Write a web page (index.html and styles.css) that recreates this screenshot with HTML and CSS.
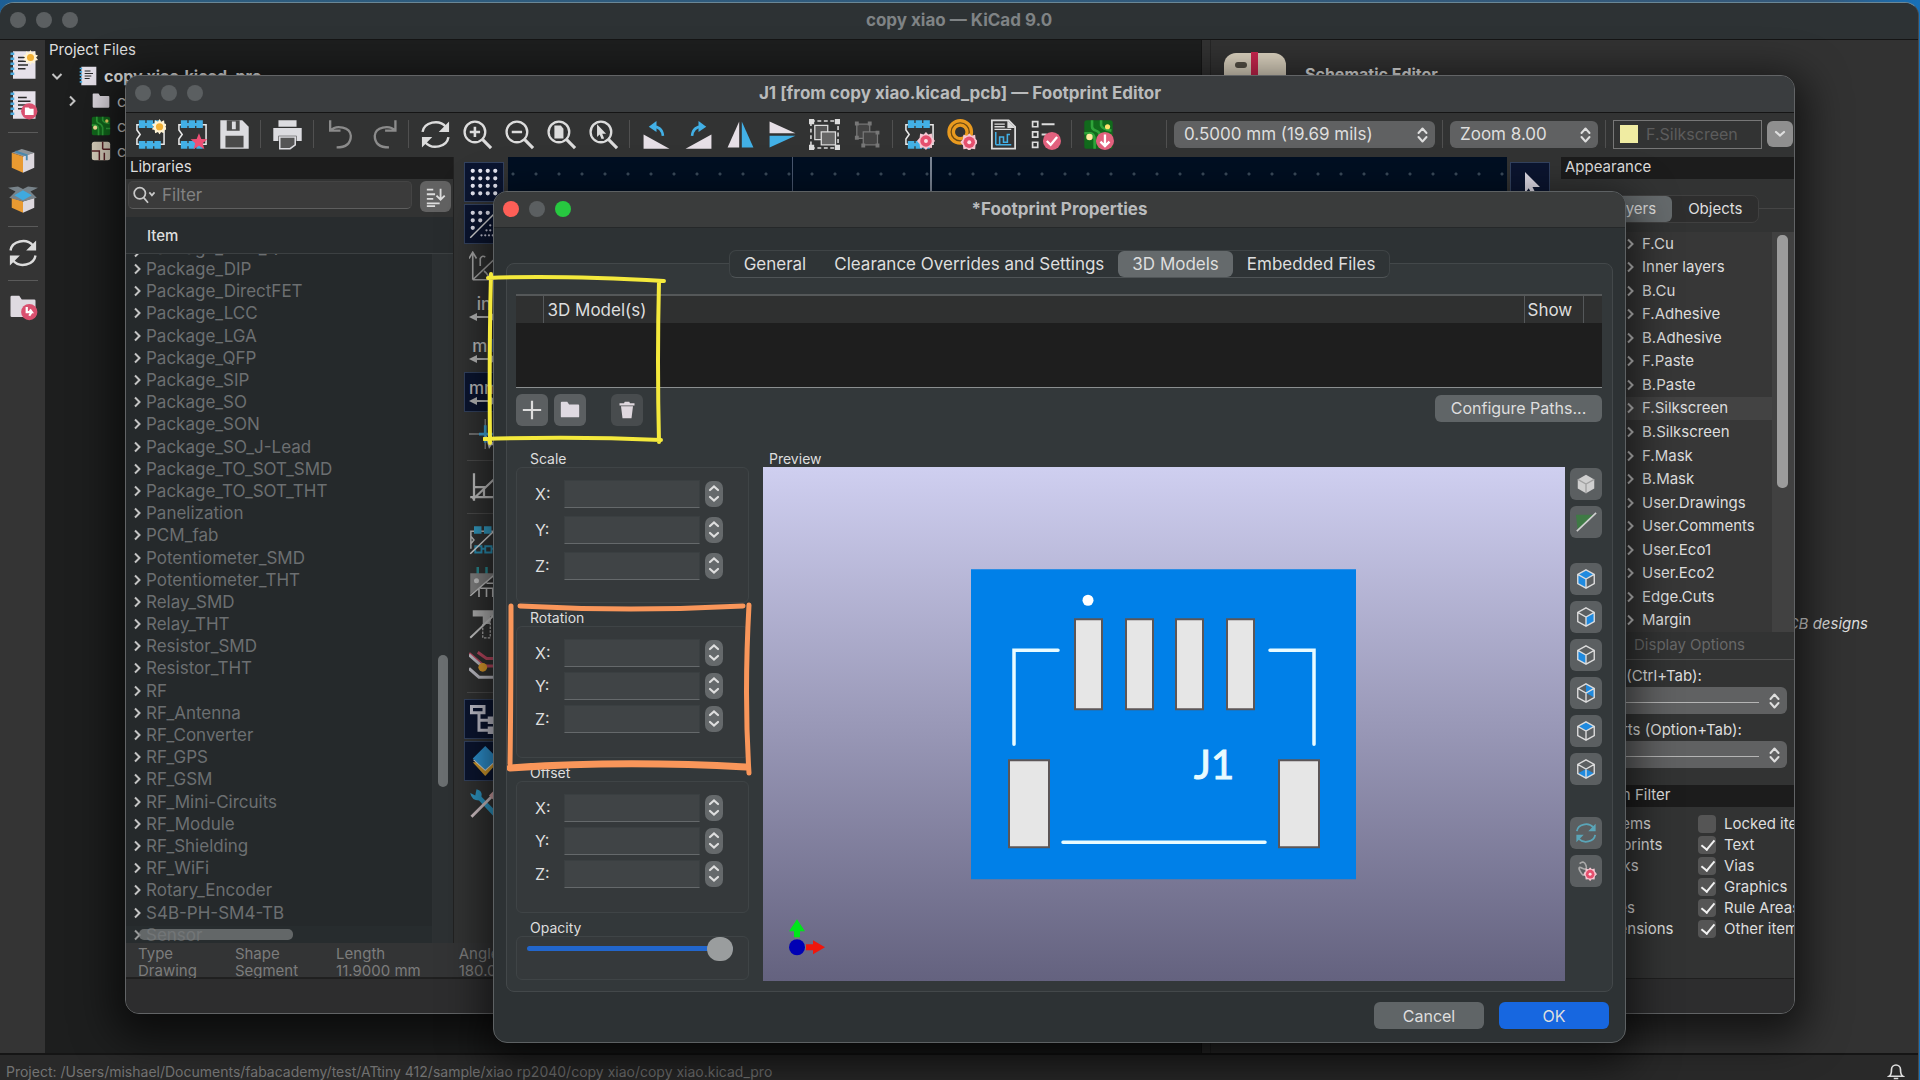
FILE: index.html
```
<!DOCTYPE html>
<html lang="en">
<head>
  <meta charset="UTF-8" />
  <meta name="viewport" content="width=device-width, initial-scale=1.0"/>
  <title>copy xiao — KiCad 9.0</title>
  <link rel="stylesheet" href="styles.css">
</head>
<body>

<!-- shared icon shapes -->
<svg class="sprite" aria-hidden="true">
  <symbol id="chev" viewBox="0 0 10 12"><path d="M3 1.500l4.500 4.500L3 10.500" fill="none" stroke="currentColor" stroke-width="2"/></symbol>
  <symbol id="updown" viewBox="0 0 12 18"><path d="M2 7l4-4.500L10 7M2 11l4 4.500L10 11" fill="none" stroke="currentColor" stroke-width="2" stroke-linecap="round" stroke-linejoin="round"/></symbol>
  <symbol id="up" viewBox="0 0 12 8"><path d="M2 6l4-3.500L10 6" fill="none" stroke="currentColor" stroke-width="2.200" stroke-linecap="round"/></symbol>
  <symbol id="down" viewBox="0 0 12 8"><path d="M2 2l4 3.500L10 2" fill="none" stroke="currentColor" stroke-width="2.200" stroke-linecap="round"/></symbol>
  <symbol id="lens" viewBox="0 0 24 24"><circle cx="10" cy="10" r="8" fill="none" stroke="#dcdcdc" stroke-width="1.800"/><path d="M16 16l6.500 6.500" stroke="#dcdcdc" stroke-width="2.400"/></symbol>
  <symbol id="refresh" viewBox="0 0 24 24"><path d="M2 10a10 8.500 0 0 1 18-4M22 14a10 8.500 0 0 1-18 4" fill="none" stroke="currentColor" stroke-width="1.900"/><path d="M22.500 2v8h-8zM1.500 22v-8h8z" fill="currentColor"/></symbol>
  <symbol id="part" viewBox="0 0 24 24"><path d="M1.500 4.500h21v15h-21v-4l2.500-3.500-2.500-3.500z" fill="none" stroke="#e8e8e8" stroke-width="1.200"/><path d="M3 1h5v2h1V1h5v2h1V1h5v6h-5V5h-1v2H9V5H8v2H3zM3 17h5v2h1v-2h5v2h1v-2h5v6h-5v-2h-1v2H9v-2H8v2H3z" fill="#42b0e6"/></symbol>
  <symbol id="sun" viewBox="0 0 12 12"><path d="M6 0l1.200 2.200L9.500 1l.3 2.500 2.200.8L10.500 6 12 8l-2.300.6L9.200 11 7.200 10 6 12 4.800 10l-2.200 1-.4-2.400L0 8l1.500-2L0 4.300l2.200-.8L2.500 1l2.300 1.200z" fill="#fff3d4"/><circle cx="6" cy="6" r="2.800" fill="#f3b135"/></symbol>
  <symbol id="gear" viewBox="0 0 12 12"><path d="M6 0l1.500 1.700 2.400-.6.300 2.500L12 6l-1.800 1.800-.3 2.900-2.500-.4L6 12l-1.500-1.700-2.400.4-.3-2.700L0 6l1.800-2.200.3-2.700 2.400.6z" fill="#f5c6d1"/><circle cx="6" cy="6" r="3.800" fill="#e5506e"/><circle cx="6" cy="6" r="1.300" fill="#fbe3e8"/></symbol>
  <symbol id="cube" viewBox="0 0 24 24"><path d="M12 2l9 5v10l-9 5-9-5V7zM3 7l9 5 9-5M12 12v10" fill="none" stroke="#dcdcdc" stroke-width="1.500"/></symbol>
  <symbol id="book" viewBox="0 0 24 24"><path d="M4 1h18v22H4z" fill="#e6e1ea"/><path d="M2 3h3M2 7h3M2 11h3M2 15h3M2 19h3" stroke="#4aa8dc" stroke-width="2"/><path d="M8 6h7M8 9h10M8 12h8M8 15h6" stroke="#2b2b2b" stroke-width="1.200"/></symbol>
  <symbol id="folder" viewBox="0 0 24 24"><path d="M2 4q0-1 1-1h6l2 3h10q1 0 1 1v12q0 1-1 1H3q-1 0-1-1z" fill="#dfdae1"/></symbol>
  <symbol id="board" viewBox="0 0 24 24"><rect x="1" y="1" width="22" height="22" rx="2" fill="#116a1c"/><path d="M7 1v5q0 2 3 3t4 5v9M14 1v4q1 3 8 4M1 11h5q3 1 3 5v7M23 15h-5" fill="none" stroke="#2fa43a" stroke-width="2"/><circle cx="5" cy="14" r="2.500" fill="#ffe9a0"/><circle cx="19" cy="6" r="2" fill="#ffe26b"/></symbol>
</svg>

<div class="window kicad">
  <header class="titlebar">
    <span class="lights"><i></i><i></i><i></i></span>
    <h1>copy xiao — KiCad 9.0</h1>
  </header>
  <div class="kicad-body">
    <nav class="side-tools">
      <button aria-label="New project"><svg viewBox="0 0 24 24"><use href="#book"/><use href="#sun" x="12" y="0" width="12" height="12"/></svg></button>
      <button aria-label="Open project"><svg viewBox="0 0 24 24"><use href="#book"/><circle cx="17" cy="17" r="6.500" fill="#d9506f"/><path d="M13.500 14h3l1 1h3v5h-7z" fill="#fff"/></svg></button>
      <hr>
      <button aria-label="Archive project"><svg viewBox="0 0 24 24"><path d="M3 7l8-3 10 3-9 3z" fill="#8c9399"/><path d="M3 7l9 3v13l-9-4z" fill="#e99a31"/><path d="M12 10l9-3v12l-9 4z" fill="#ddd8de"/><path d="M6 6l9 3v4" fill="none" stroke="#4a88ac" stroke-width="1.500"/></svg></button>
      <button aria-label="Unarchive project"><svg viewBox="0 0 24 24"><path d="M3 11l9 3v9l-9-4z" fill="#e99a31"/><path d="M12 14l9-3v8l-9 4z" fill="#ddd8de"/><path d="M0 3l6 3-5 5 11 3 11-3-5-5 6-3-8-1-4 2-4-2z" fill="#78838a"/><path d="M5 9l7-4 7 4-7 4z" fill="#3fa9de"/></svg></button>
      <hr>
      <button aria-label="Refresh"><svg class="light"><use href="#refresh"/></svg></button>
      <hr>
      <button aria-label="Open project folder"><svg viewBox="0 0 24 24"><use href="#folder"/><circle cx="17" cy="16" r="6.500" fill="#d9506f"/><path d="M15 12v4h4l-1.500-2M19 16l-2 3" fill="none" stroke="#fff" stroke-width="1.800"/></svg></button>
    </nav>
    <section class="project">
      <h2>Project Files</h2>
      <ul>
        <li><svg class="chev open"><use href="#chev"/></svg><svg class="file"><use href="#book"/></svg><b>copy xiao.kicad_pro</b></li>
        <li class="child"><svg class="chev"><use href="#chev"/></svg><svg class="file"><use href="#folder"/></svg>copy xiao-backups</li>
        <li class="child leaf"><svg class="file"><use href="#board"/></svg>copy xiao.kicad_pcb</li>
        <li class="child leaf"><svg class="file" viewBox="0 0 24 24"><rect x="1" y="1" width="22" height="22" rx="3" fill="#ddd3c0"/><path d="M14 1v9M1 12h9v11M14 10h9M16 14v9" fill="none" stroke="#5b2226" stroke-width="1.800"/></svg>copy xiao.kicad_sch</li>
      </ul>
    </section>
    <section class="launchers">
      <div class="launcher">
        <svg viewBox="0 0 64 64"><rect x="1" y="1" width="62" height="62" rx="12" fill="#dcd3c0"/><rect x="28" y="0" width="7" height="26" fill="#c9254e"/><path d="M31 26v30" stroke="#7b1d33" stroke-width="2"/><rect x="12" y="10" width="12" height="6" rx="3" fill="#555046"/></svg>
        <b>Schematic Editor</b>
      </div>
      <em>schematics and PCB designs</em>
    </section>
  </div>
  <footer class="project-status">
    <span>Project: /Users/mishael/Documents/fabacademy/test/ATtiny 412/sample/xiao rp2040/copy xiao/copy xiao.kicad_pro</span>
    <button aria-label="Notifications"><svg viewBox="0 0 24 24"><path d="M3 19q3-2 3-9a6 6 0 0 1 12 0q0 7 3 9zM9 22h6" fill="none" stroke="#ddd" stroke-width="2.200"/></svg></button>
  </footer>
</div>

<div class="window editor">
  <header class="titlebar">
    <span class="lights"><i></i><i></i><i></i></span>
    <h1>J1 [from copy xiao.kicad_pcb] — Footprint Editor</h1>
  </header>

  <div class="toolbar">
    <button aria-label="New footprint"><svg viewBox="0 0 24 24"><use href="#part"/><use href="#sun" x="13" y="0" width="12" height="12"/></svg></button>
    <button aria-label="New footprint from wizard"><svg viewBox="0 0 24 24"><use href="#part"/><path d="M17 11l1.800 4.500 4.700.2-3.600 3 1.300 4.800-4.200-2.700-4.200 2.700 1.300-4.800-3.600-3 4.700-.2z" fill="#ee4f75"/></svg></button>
    <button aria-label="Save"><svg viewBox="0 0 24 24"><path d="M1 1h17l5 5v17H1z" fill="#dcdce0"/><path d="M6 1h10v8H6zM5 13h14v9H5z" fill="#4a4a4a"/><path d="M10 2h3v6h-3z" fill="#dcdce0"/></svg></button>
    <hr>
    <button aria-label="Print"><svg viewBox="0 0 24 24"><path d="M5 1h14v5H5z" fill="#dcdce0"/><path d="M1 7h22v10h-4v-4H5v4H1z" fill="#dcdce0"/><path d="M6 14h12v6l-4 3H6z" fill="#555" stroke="#dcdce0" stroke-width="1.200"/></svg></button>
    <hr>
    <button aria-label="Undo"><svg viewBox="0 0 24 24"><path d="M4 1v8h8M4 9a9 7 0 0 1 16 4q0 9-11 9" fill="none" stroke="#8b8b8b" stroke-width="1.800"/></svg></button>
    <button aria-label="Redo"><svg viewBox="0 0 24 24"><path d="M22 1v8h-8M22 9a9 7 0 0 0-16 4q0 9 11 9" fill="none" stroke="#8b8b8b" stroke-width="1.800"/></svg></button>
    <hr>
    <button aria-label="Refresh"><svg class="light"><use href="#refresh"/></svg></button>
    <button aria-label="Zoom in"><svg viewBox="0 0 24 24"><use href="#lens"/><path d="M10 6v8M6 10h8" stroke="#dcdcdc" stroke-width="2"/></svg></button>
    <button aria-label="Zoom out"><svg viewBox="0 0 24 24"><use href="#lens"/><path d="M6 10h8" stroke="#dcdcdc" stroke-width="2"/></svg></button>
    <button aria-label="Zoom to fit"><svg viewBox="0 0 24 24"><use href="#lens"/><path d="M6.500 5h5l2 2.500V15h-7z" fill="#dcdcdc"/></svg></button>
    <button aria-label="Zoom to selection"><svg viewBox="0 0 24 24"><use href="#lens"/><path d="M7 4l7 7.500h-3l1.500 3.500-2 .5L9 12l-2 2z" fill="#dcdcdc"/></svg></button>
    <hr>
    <button aria-label="Rotate counterclockwise"><svg viewBox="0 0 24 24"><path d="M2 12v11h20z" fill="#e6dfe6"/><path d="M8 6q8-1 9 7" fill="none" stroke="#42b0e6" stroke-width="2"/><path d="M6 6l6-4.500V10z" fill="#42b0e6"/></svg></button>
    <button aria-label="Rotate clockwise"><svg viewBox="0 0 24 24"><path d="M22 12v11H2z" fill="#e6dfe6"/><path d="M16 6q-8-1-9 7" fill="none" stroke="#42b0e6" stroke-width="2"/><path d="M18 6l-6-4.500V10z" fill="#42b0e6"/></svg></button>
    <button aria-label="Mirror horizontally"><svg viewBox="0 0 24 24"><path d="M11 2v20H2z" fill="#e6dfe6"/><path d="M13 2v20h9z" fill="#42b0e6"/></svg></button>
    <button aria-label="Mirror vertically"><svg viewBox="0 0 24 24"><path d="M2 11V2l20 9z" fill="#e6dfe6"/><path d="M2 13v9l20-9z" fill="#42b0e6"/></svg></button>
    <button aria-label="Group"><svg viewBox="0 0 24 24"><rect x="1.500" y="1.500" width="21" height="21" fill="none" stroke="#dcdcdc" stroke-width="1.200" stroke-dasharray="3 2"/><path d="M0 0h4v4H0zM20 0h4v4h-4zM0 20h4v4H0zM20 20h4v4h-4z" fill="#dcdcdc"/><path d="M4.500 5h10v11h-10z" fill="#555" stroke="#dcdcdc"/><path d="M9.500 10h11v10h-11z" fill="#666" stroke="#dcdcdc"/></svg></button>
    <button aria-label="Ungroup"><svg viewBox="0 0 24 24"><path d="M4.500 4h10v11h-10z" fill="#444" stroke="#777"/><path d="M9.500 10h11v10h-11z" fill="#444" stroke="#777"/><path d="M3 2h3v3H3zM13 2h3v3h-3zM3 13h3v3H3zM19 9h3v3h-3zM8 19h3v3H8zM19 19h3v3h-3z" fill="#777"/></svg></button>
    <hr>
    <button aria-label="Footprint properties"><svg viewBox="0 0 24 24"><use href="#part"/><use href="#gear" x="10" y="10" width="14" height="14"/></svg></button>
    <button aria-label="Default pad properties"><svg viewBox="0 0 24 24"><circle cx="11" cy="10" r="7" fill="none" stroke="#e99a1f" stroke-width="6"/><circle cx="11" cy="10" r="7" fill="none" stroke="#6d4a12" stroke-width="1"/><use href="#gear" x="11" y="11" width="14" height="14"/></svg></button>
    <button aria-label="Datasheet"><svg viewBox="0 0 24 24"><path d="M3 1h13l5 5v17H3z" fill="#343434" stroke="#dcdcdc" stroke-width="1.400"/><path d="M15 1v6h6z" fill="#dcdcdc"/><path d="M5 4h8M5 6h8M5 8h13" stroke="#dcdcdc"/><path d="M6 20V10M6 20h12M9 20v-6h3v4h3v-6h2" fill="none" stroke="#42b0e6" stroke-width="1.200"/></svg></button>
    <button aria-label="Footprint checker"><svg viewBox="0 0 24 24"><path d="M2 2h4v4H2zM2 10h4v4H2zM2 18h4v4H2z" fill="none" stroke="#dcdcdc" stroke-width="1.300"/><path d="M9 4h10M9 12h4" stroke="#dcdcdc" stroke-width="1.500"/><circle cx="17" cy="17" r="7" fill="#e2617e"/><path d="M13 17l3 3 5-6" fill="none" stroke="#fff" stroke-width="1.800"/></svg></button>
    <hr>
    <button aria-label="Load footprint from board"><svg viewBox="0 0 24 24"><use href="#board"/><circle cx="17" cy="17" r="7" fill="#e2617e"/><path d="M17 12v9M13.500 17.500L17 21l3.500-3.500" fill="none" stroke="#fff" stroke-width="1.800"/></svg></button>
    <div class="toolbar-right">
      <hr>
      <span class="select grid-select"><select aria-label="Grid"><option>0.5000 mm (19.69 mils)</option></select><svg><use href="#updown"/></svg></span>
      <hr>
      <span class="select zoom-select"><select aria-label="Zoom"><option>Zoom 8.00</option></select><svg><use href="#updown"/></svg></span>
      <hr>
      <span class="layer-box"><i></i><input type="text" aria-label="Active layer" value="F.Silkscreen" disabled></span>
      <button class="layer-drop" aria-label="Choose layer"><svg><use href="#down"/></svg></button>
    </div>
  </div>

  <div class="editor-body">
    <div class="editor-main">
      <div class="editor-panes">
        <section class="libraries">
          <h2>Libraries</h2>
          <div class="filter-row">
            <label class="search">
              <svg viewBox="0 0 30 20"><circle cx="9" cy="8" r="6.500" fill="none" stroke="#c8c8c8" stroke-width="2"/><path d="M13.500 13l5 6M20 7l3 3.500L26 7" fill="none" stroke="#c8c8c8" stroke-width="2"/></svg>
              <input type="text" placeholder="Filter" aria-label="Filter">
            </label>
            <button class="sort" aria-label="Sort"><svg viewBox="0 0 24 24"><path d="M2 4h7M2 9h9M2 14h7M2 19h14M2 22h9" stroke="#ddd" stroke-width="2"/><path d="M17 3v12M12.500 10.500L17 15l4.500-4.500" fill="none" stroke="#ddd" stroke-width="2"/></svg></button>
          </div>
          <div class="tree-head">Item</div>
          <div class="tree">
            <ul>
              <li class="cut"><svg class="chev"><use href="#chev"/></svg>Package_DFN_QFN</li>
              <li><svg class="chev"><use href="#chev"/></svg>Package_DIP</li>
              <li><svg class="chev"><use href="#chev"/></svg>Package_DirectFET</li>
              <li><svg class="chev"><use href="#chev"/></svg>Package_LCC</li>
              <li><svg class="chev"><use href="#chev"/></svg>Package_LGA</li>
              <li><svg class="chev"><use href="#chev"/></svg>Package_QFP</li>
              <li><svg class="chev"><use href="#chev"/></svg>Package_SIP</li>
              <li><svg class="chev"><use href="#chev"/></svg>Package_SO</li>
              <li><svg class="chev"><use href="#chev"/></svg>Package_SON</li>
              <li><svg class="chev"><use href="#chev"/></svg>Package_SO_J-Lead</li>
              <li><svg class="chev"><use href="#chev"/></svg>Package_TO_SOT_SMD</li>
              <li><svg class="chev"><use href="#chev"/></svg>Package_TO_SOT_THT</li>
              <li><svg class="chev"><use href="#chev"/></svg>Panelization</li>
              <li><svg class="chev"><use href="#chev"/></svg>PCM_fab</li>
              <li><svg class="chev"><use href="#chev"/></svg>Potentiometer_SMD</li>
              <li><svg class="chev"><use href="#chev"/></svg>Potentiometer_THT</li>
              <li><svg class="chev"><use href="#chev"/></svg>Relay_SMD</li>
              <li><svg class="chev"><use href="#chev"/></svg>Relay_THT</li>
              <li><svg class="chev"><use href="#chev"/></svg>Resistor_SMD</li>
              <li><svg class="chev"><use href="#chev"/></svg>Resistor_THT</li>
              <li><svg class="chev"><use href="#chev"/></svg>RF</li>
              <li><svg class="chev"><use href="#chev"/></svg>RF_Antenna</li>
              <li><svg class="chev"><use href="#chev"/></svg>RF_Converter</li>
              <li><svg class="chev"><use href="#chev"/></svg>RF_GPS</li>
              <li><svg class="chev"><use href="#chev"/></svg>RF_GSM</li>
              <li><svg class="chev"><use href="#chev"/></svg>RF_Mini-Circuits</li>
              <li><svg class="chev"><use href="#chev"/></svg>RF_Module</li>
              <li><svg class="chev"><use href="#chev"/></svg>RF_Shielding</li>
              <li><svg class="chev"><use href="#chev"/></svg>RF_WiFi</li>
              <li><svg class="chev"><use href="#chev"/></svg>Rotary_Encoder</li>
              <li><svg class="chev"><use href="#chev"/></svg>S4B-PH-SM4-TB</li>
              <li><svg class="chev"><use href="#chev"/></svg>Sensor</li>
            </ul>
            <div class="tree-vbar"><i></i></div>
            <div class="tree-hbar"><i></i></div>
          </div>
        </section>

        <nav class="tool-column">
          <button class="on" aria-label="Show grid"><svg viewBox="0 0 24 24"><path d="M3 3h20M3 9h20M3 15h20M3 21h20" stroke="#e8e8f4" stroke-width="3.400" stroke-linecap="round" stroke-dasharray="0 6"/></svg></button>
          <button class="on" aria-label="Grid overrides"><svg viewBox="0 0 24 24"><path d="M3 3h20M3 9h11M3 15h6" stroke="#e8e8f4" stroke-width="3.400" stroke-linecap="round" stroke-dasharray="0 6"/><path d="M1 23L23 1" stroke="#ddd" stroke-width="1.200"/><path d="M17 13h7M14 17h10M10 21h14" stroke="#ccd" stroke-width="1.800" stroke-linecap="round" stroke-dasharray="0 3"/></svg></button>
          <button aria-label="Polar coordinates"><svg viewBox="0 0 24 24"><path d="M3 23V2M0 6l3-5 3 5M3 23h20M3 23L23 4M16 23q0-4-4-7M9 12V6q2-3 4-1" fill="none" stroke="#aaa" stroke-width="1.300"/></svg></button>
          <button aria-label="Inches"><span>in</span><svg class="dim" viewBox="0 0 30 8"><path d="M4 4h22" stroke="#bbb" stroke-width="2"/><path d="M0 4l8-4v8zM30 4l-8-4v8z" fill="#bbb"/></svg></button>
          <button aria-label="Mils"><span>mil</span><svg class="dim" viewBox="0 0 30 8"><path d="M4 4h22" stroke="#bbb" stroke-width="2"/><path d="M0 4l8-4v8zM30 4l-8-4v8z" fill="#bbb"/></svg></button>
          <button class="on" aria-label="Millimeters"><span>mm</span><svg class="dim" viewBox="0 0 30 8"><path d="M4 4h22" stroke="#bbb" stroke-width="2"/><path d="M0 4l8-4v8zM30 4l-8-4v8z" fill="#bbb"/></svg></button>
          <button aria-label="Full window crosshair"><svg viewBox="0 0 24 24"><path d="M0 12h24M13 0v24" stroke="#8a8a8a" stroke-width="1.200"/><path d="M13 5v14M8 12h11" stroke="#3fa9de" stroke-width="2.200"/><path d="M13 13l9 8h-4l-2 3z" fill="#ddd"/></svg></button>
          <hr>
          <button aria-label="Limit angles"><svg viewBox="0 0 24 24"><path d="M4 1v22M1 20h23M3 22L23 3M4 12h8v8" fill="none" stroke="#c4c4c4" stroke-width="1.800"/></svg></button>
          <hr>
          <button aria-label="Pad outlines"><svg viewBox="0 0 24 24"><path d="M1.500 19V5h22M1.500 9L4 12l-2.500 3" fill="none" stroke="#bbb" stroke-width="1.200"/><path d="M4 1h6v6H4zM12 1h6v6h-6z" fill="#35a0c8"/><path d="M5 17h5v5H5zM13 17h5v5h-5zM10 19h3M18 19h5" fill="none" stroke="#2b93b8" stroke-width="1.500"/><path d="M1 23L23 2" stroke="#ddd" stroke-width="1.200"/></svg></button>
          <button aria-label="Graphic outlines"><svg viewBox="0 0 24 24"><path d="M7 0v6M14 0v6" stroke="#2b8f96" stroke-width="2"/><path d="M1 5h22L1 22z" fill="#858585"/><circle cx="6" cy="11" r="2" fill="#ccc"/><path d="M1 23L23 4M9 17h14M14 13h9M8 17v7M14 17v7M19 17v7" stroke="#c4c4c4" stroke-width="1.300"/></svg></button>
          <button aria-label="Text outlines"><svg viewBox="0 0 24 24"><path d="M3 1h21v5H3zM11 6h6v6h-6z" fill="#b5b5b5"/><path d="M11 12v11h6V8" fill="none" stroke="#b5b5b5" stroke-dasharray="2 1"/><path d="M1 23L22 3" stroke="#ccc" stroke-width="1.500"/></svg></button>
          <button aria-label="High contrast"><svg viewBox="0 0 24 24"><path d="M0 2l12 10h12M7 1l7 5h10" fill="none" stroke="#c04a63" stroke-width="2.400"/><path d="M0 3l9 8M0 14l8 7h12l4 3" fill="none" stroke="#c4c4cc" stroke-width="2.400"/><circle cx="11" cy="13" r="3.500" fill="#e5a12e"/></svg></button>
          <hr>
          <button class="on" aria-label="Library tree"><svg viewBox="0 0 24 24"><path d="M2 2h10v5H2z" fill="none" stroke="#c8c8d4" stroke-width="2.400"/><path d="M8 8v13h9M8 13h9" fill="none" stroke="#c8c8d4" stroke-width="2.400"/><path d="M15 10h9v6h-9zM15 18h9v6h-9z" fill="#c8c8d4"/></svg></button>
          <button class="on" aria-label="Layers manager"><svg viewBox="0 0 24 24"><path d="M3 13l10 11 10-11z" fill="#dba12d"/><path d="M3 11l10 9 10-9z" fill="#e8e2d8"/><path d="M3 10L13 0l10 10-10 9z" fill="#2f97d8"/></svg></button>
          <button aria-label="Preferences"><svg viewBox="0 0 24 24"><path d="M1 4l4 2 1-5q5 1 4 6l13 13-3 3L8 10q-6 0-7-6z" fill="#2f9bc9"/><path d="M2 23L18 7" stroke="#d8c8cc" stroke-width="2.200"/><path d="M16 6l5-5 3 3-5 5z" fill="#d9a9ab"/></svg></button>
        </nav>

        <div class="canvas"><div class="grid-dots"></div></div>

        <nav class="tool-column right-tools">
          <button class="on" aria-label="Select"><svg viewBox="0 0 24 24"><path d="M8 4l12 12h-6l3 6-3 1-3-6-3 4z" fill="#e3dfe9"/></svg></button>
        </nav>
      </div>
      <dl class="msg-panel">
        <div><dt>Type</dt><dd>Drawing</dd></div>
        <div><dt>Shape</dt><dd>Segment</dd></div>
        <div><dt>Length</dt><dd>11.9000 mm</dd></div>
        <div><dt>Angle</dt><dd>180.0</dd></div>
      </dl>
    </div>

    <aside class="appearance">
      <h2>Appearance</h2>
      <div class="panel-tabs">
        <div class="segmented"><button class="active">Layers</button><button>Objects</button></div>
      </div>
      <div class="layers">
        <ul>
          <li><svg class="chev"><use href="#chev"/></svg>F.Cu</li>
          <li><svg class="chev"><use href="#chev"/></svg>Inner layers</li>
          <li><svg class="chev"><use href="#chev"/></svg>B.Cu</li>
          <li><svg class="chev"><use href="#chev"/></svg>F.Adhesive</li>
          <li><svg class="chev"><use href="#chev"/></svg>B.Adhesive</li>
          <li><svg class="chev"><use href="#chev"/></svg>F.Paste</li>
          <li><svg class="chev"><use href="#chev"/></svg>B.Paste</li>
          <li class="selected"><svg class="chev"><use href="#chev"/></svg>F.Silkscreen</li>
          <li><svg class="chev"><use href="#chev"/></svg>B.Silkscreen</li>
          <li><svg class="chev"><use href="#chev"/></svg>F.Mask</li>
          <li><svg class="chev"><use href="#chev"/></svg>B.Mask</li>
          <li><svg class="chev"><use href="#chev"/></svg>User.Drawings</li>
          <li><svg class="chev"><use href="#chev"/></svg>User.Comments</li>
          <li><svg class="chev"><use href="#chev"/></svg>User.Eco1</li>
          <li><svg class="chev"><use href="#chev"/></svg>User.Eco2</li>
          <li><svg class="chev"><use href="#chev"/></svg>Edge.Cuts</li>
          <li><svg class="chev"><use href="#chev"/></svg>Margin</li>
        </ul>
        <div class="layers-bar"><i></i></div>
      </div>
      <p class="display-options">Display Options</p>
      <label for="presets">Presets (Ctrl+Tab):</label>
      <span class="select preset"><select id="presets"><option></option></select><svg><use href="#updown"/></svg></span>
      <label for="viewports">Viewports (Option+Tab):</label>
      <span class="select preset"><select id="viewports"><option></option></select><svg><use href="#updown"/></svg></span>
      <h2 class="filter-title">Selection Filter</h2>
      <div class="filters">
        <label><input type="checkbox" checked>All items</label>
        <label><input type="checkbox">Locked items</label>
        <label><input type="checkbox" checked>Footprints</label>
        <label><input type="checkbox" checked>Text</label>
        <label><input type="checkbox" checked>Tracks</label>
        <label><input type="checkbox" checked>Vias</label>
        <label><input type="checkbox" checked>Pads</label>
        <label><input type="checkbox" checked>Graphics</label>
        <label><input type="checkbox" checked>Zones</label>
        <label><input type="checkbox" checked>Rule Areas</label>
        <label><input type="checkbox" checked>Dimensions</label>
        <label><input type="checkbox" checked>Other items</label>
      </div>
    </aside>
  </div>
  <footer class="editor-status"></footer>
</div>

<div class="window dialog">
  <header class="titlebar">
    <span class="lights"><i class="red"></i><i></i><i class="green"></i></span>
    <h1>*Footprint Properties</h1>
  </header>
  <div class="segmented dialog-tabs">
    <button>General</button><button>Clearance Overrides and Settings</button><button class="active">3D Models</button><button>Embedded Files</button>
  </div>

  <div class="frame">
    <table class="models">
      <thead><tr><th class="num"></th><th>3D Model(s)</th><th class="show">Show</th><th class="end"></th></tr></thead>
      <tbody><tr><td colspan="4"></td></tr></tbody>
    </table>
    <div class="model-buttons">
      <button class="icon-button" aria-label="Add model"><svg viewBox="0 0 24 24"><path d="M12 2v20M2 12h20" stroke="#ddd" stroke-width="2.400"/></svg></button>
      <button class="icon-button" aria-label="Browse models"><svg><use href="#folder"/></svg></button>
      <button class="icon-button trash" aria-label="Delete model"><svg viewBox="0 0 24 24"><path d="M2 3h6l1-2h6l1 2h6v3H2zM4 7h16l-2 16H6z" fill="#dfd8de"/></svg></button>
      <button class="push configure">Configure Paths...</button>
    </div>

    <div class="model-settings">
      <div class="groups">
        <section class="group scale">
          <h3>Scale</h3>
          <div class="box">
            <div class="axis"><label for="sx">X:</label><input type="text" id="sx"><span class="spin"><button aria-label="Up"><svg><use href="#up"/></svg></button><button aria-label="Down"><svg><use href="#down"/></svg></button></span></div>
            <div class="axis"><label for="sy">Y:</label><input type="text" id="sy"><span class="spin"><button aria-label="Up"><svg><use href="#up"/></svg></button><button aria-label="Down"><svg><use href="#down"/></svg></button></span></div>
            <div class="axis"><label for="sz">Z:</label><input type="text" id="sz"><span class="spin"><button aria-label="Up"><svg><use href="#up"/></svg></button><button aria-label="Down"><svg><use href="#down"/></svg></button></span></div>
          </div>
        </section>
        <section class="group">
          <h3>Rotation</h3>
          <div class="box">
            <div class="axis"><label for="rx">X:</label><input type="text" id="rx"><span class="spin"><button aria-label="Up"><svg><use href="#up"/></svg></button><button aria-label="Down"><svg><use href="#down"/></svg></button></span></div>
            <div class="axis"><label for="ry">Y:</label><input type="text" id="ry"><span class="spin"><button aria-label="Up"><svg><use href="#up"/></svg></button><button aria-label="Down"><svg><use href="#down"/></svg></button></span></div>
            <div class="axis"><label for="rz">Z:</label><input type="text" id="rz"><span class="spin"><button aria-label="Up"><svg><use href="#up"/></svg></button><button aria-label="Down"><svg><use href="#down"/></svg></button></span></div>
          </div>
        </section>
        <section class="group">
          <h3>Offset</h3>
          <div class="box">
            <div class="axis"><label for="ox">X:</label><input type="text" id="ox"><span class="spin"><button aria-label="Up"><svg><use href="#up"/></svg></button><button aria-label="Down"><svg><use href="#down"/></svg></button></span></div>
            <div class="axis"><label for="oy">Y:</label><input type="text" id="oy"><span class="spin"><button aria-label="Up"><svg><use href="#up"/></svg></button><button aria-label="Down"><svg><use href="#down"/></svg></button></span></div>
            <div class="axis"><label for="oz">Z:</label><input type="text" id="oz"><span class="spin"><button aria-label="Up"><svg><use href="#up"/></svg></button><button aria-label="Down"><svg><use href="#down"/></svg></button></span></div>
          </div>
        </section>
        <section class="group opacity">
          <h3><label for="opacity">Opacity</label></h3>
          <div class="box"><input type="range" id="opacity" min="0" max="100" value="100"></div>
        </section>
      </div>

      <section class="preview">
        <h3>Preview</h3>
        <svg viewBox="0 0 802 514">
          <rect x="208" y="102" width="385" height="310" fill="#0080e8"/>
          <g fill="#e6e6e6" stroke="#5c5657" stroke-width="2">
            <rect x="312" y="152" width="27" height="90"/>
            <rect x="363" y="152" width="27" height="90"/>
            <rect x="413" y="152" width="27" height="90"/>
            <rect x="464" y="152" width="27" height="90"/>
            <rect x="246" y="293" width="40" height="87"/>
            <rect x="516" y="293" width="40" height="87"/>
          </g>
          <circle cx="325" cy="133" r="5.500" fill="#fff"/>
          <path d="M295 183H251v94M507 183h44v94M300 375h202" fill="none" stroke="#e8fbff" stroke-width="3.500" stroke-linecap="round"/>
          <text x="431" y="312" class="refdes">J1</text>
          <path d="M34 476v-12M38 480h12" stroke="#777" stroke-width="4"/>
          <path d="M34 452l8 12H26zM31 463h6v7h-6z" fill="#00e61a"/>
          <path d="M62 480l-12-7v14zM43 477h7v6h-7z" fill="#f0160c"/>
          <circle cx="34" cy="480" r="8" fill="#0000b4"/>
        </svg>
      </section>

      <nav class="view-buttons">
        <button class="icon-button" aria-label="Toggle orthographic projection"><svg viewBox="0 0 24 24"><path d="M12 2l9 5v10l-9 5-9-5V7z" fill="#cfcfcf"/><path d="M3 7l9 5 9-5M12 12v10" fill="none" stroke="#a2a2a2" stroke-width="1.500"/></svg></button>
        <button class="icon-button" aria-label="Toggle board body"><svg viewBox="0 0 24 24"><path d="M1 4h20L3 21z" fill="#3f7a45"/><path d="M2 22L23 2" stroke="#d0d0d0" stroke-width="1.800"/></svg></button>
        <button class="icon-button apart" aria-label="View left"><svg viewBox="0 0 24 24"><path d="M3 7l9-5 9 5-9 5v10l-9-5z" fill="#1f8adf"/><use href="#cube"/></svg></button>
        <button class="icon-button" aria-label="View right"><svg viewBox="0 0 24 24"><path d="M12 12l9-5v10l-9 5z" fill="#1f8adf"/><use href="#cube"/></svg></button>
        <button class="icon-button" aria-label="View front"><svg viewBox="0 0 24 24"><path d="M3 7l9 5v10l-9-5z" fill="#1f8adf"/><use href="#cube"/></svg></button>
        <button class="icon-button" aria-label="View back"><svg viewBox="0 0 24 24"><path d="M12 2l9 5v10l-9-5z" fill="#1f8adf"/><use href="#cube"/></svg></button>
        <button class="icon-button" aria-label="View top"><svg viewBox="0 0 24 24"><path d="M3 7l9-5 9 5-9 5z" fill="#1f8adf"/><use href="#cube"/></svg></button>
        <button class="icon-button" aria-label="View bottom"><svg viewBox="0 0 24 24"><path d="M3 17l9-5 9 5-9 5z" fill="#1f8adf"/><use href="#cube"/></svg></button>
        <button class="icon-button reload" aria-label="Reload board"><svg><use href="#refresh"/></svg></button>
        <button class="icon-button" aria-label="3D view settings"><svg viewBox="0 0 24 24"><path d="M5 4q5-4 7 2t-4 3-2 4 5 0" fill="none" stroke="#aaa" stroke-width="1.800"/><use href="#gear" x="9" y="8" width="15" height="15"/></svg></button>
      </nav>
    </div>
  </div>

  <footer class="dialog-footer">
    <button class="push">Cancel</button>
    <button class="push primary">OK</button>
  </footer>

  <!-- hand drawn markers -->
  <svg class="marker yellow" viewBox="0 0 184 174"><path d="M5 6q70-3 176 3M176 9q-2 80 0 161M1 167q90-3 177 1M8 2q-2 80-1 169" fill="none" stroke="#f4e93c" stroke-width="4" stroke-linecap="round"/></svg>
  <svg class="marker orange" viewBox="0 0 246 176"><path d="M13 5q110 6 223 0M242 4q-5 90 0 168M4 5q0 90-1 158" fill="none" stroke="#f9965a" stroke-width="5" stroke-linecap="round"/><path d="M3 167q110-8 236-1" fill="none" stroke="#f9965a" stroke-width="7" stroke-linecap="round"/></svg>
</div>

</body>
</html>
```
FILE: styles.css
```
* {
  box-sizing: border-box;
}

body {
  margin: 0;
  height: 100vh;
  overflow: hidden;
  position: relative;
  background: linear-gradient(90deg, #1d5f96, #2c5c7e 5%, #35597a 95%, #1670b8);
  color: #dedede;
  font-family: Inter, "Liberation Sans", sans-serif;
  font-size: 16px;
  line-height: 20px;
}

h1, h2, h3, p, ul, dl, dd {
  margin: 0;
  padding: 0;
  list-style: none;
}

h1 {
  font-size: 17px;
}

h2, h3 {
  font-weight: 400;
}

button, input, select {
  font: inherit;
  color: inherit;
  border: 0;
  background: none;
  padding: 0;
  margin: 0;
}

hr {
  margin: 0;
  border: 0;
  flex: none;
}

svg {
  display: block;
  flex: none;
}

.sprite {
  position: absolute;
  width: 0;
  height: 0;
}

.light {
  color: #dcdcdc;
}

.chev {
  width: 10px;
  height: 12px;
  color: #c4c4c4;
}

/* windows */

.window {
  position: absolute;
  display: flex;
  flex-direction: column;
  overflow: hidden;
}

.titlebar {
  flex: none;
  display: grid;
  grid-template-columns: 1fr auto 1fr;
  align-items: center;
  padding-bottom: 2px;
  border-bottom: 1px solid #151515;
}

.lights {
  display: flex;
  gap: 10px;
  padding-left: 9px;
}

.lights i {
  width: 16px;
  height: 16px;
  border-radius: 50%;
  background: #5b5f61;
}

.lights .red {
  background: #fe5f57;
}

.lights .green {
  background: #27c840;
}

/* project manager */

.kicad {
  inset: 2px 1px 0 0;
  border-top: 1px solid #6a8796;
  border-right: 1px solid #4a4a4a;
  border-radius: 14px 14px 0 0;
  background: #323232;
}

.kicad .titlebar {
  height: 37px;
  background: #2d3234;
}

.kicad .lights {
  padding-left: 10px;
}

.kicad h1 {
  color: #7f8385;
}

.kicad-body {
  flex: 1;
  display: flex;
  min-height: 0;
}

.side-tools {
  width: 45px;
  padding: 5px 0 0;
  display: flex;
  flex-direction: column;
  align-items: center;
  background: #343434;
}

.side-tools button {
  height: 40px;
  display: flex;
  align-items: center;
}

.side-tools svg {
  width: 30px;
  height: 30px;
}

.side-tools hr {
  width: 30px;
  height: 1px;
  margin: 7px 0 6px;
  background: #5a5a5a;
}

.project {
  flex: 1;
  background: #1d1e1e;
  border-right: 1px solid #161616;
}

.project h2 {
  padding-left: 4px;
  font-size: 15px;
}

.project li {
  display: flex;
  align-items: center;
  height: 25px;
  padding-left: 7px;
}

.project ul {
  padding-top: 3px;
}

.project .file {
  width: 20px;
  height: 20px;
  margin: 0 6px 0 16px;
}

.project .open {
  transform: rotate(90deg);
}

.project .child {
  padding-left: 22px;
}

.project .child .file {
  margin: 0 6px 0 14px;
}

.project .leaf {
  padding-left: 32px;
}

.launchers {
  width: 708px;
  margin-left: 8px;
  border-left: 1px solid #262626;
  display: flex;
  flex-direction: column;
}

.launcher {
  display: flex;
  align-items: center;
  gap: 18px;
  padding: 12px 0 0 12px;
  height: 56px;
}

.launcher svg {
  width: 64px;
  height: 64px;
  align-self: flex-start;
}

.launchers em {
  margin: 518px 50px 0 0;
  text-align: right;
  font-size: 15px;
}

.project-status {
  flex: none;
  height: 27px;
  padding: 7px 13px 0 6px;
  display: flex;
  justify-content: space-between;
  border-top: 2px solid #151515;
  background: #292929;
  color: #737373;
  font-size: 14px;
}

.project-status svg {
  width: 18px;
  height: 18px;
}

/* footprint editor */

.editor {
  inset: 75px 125px 66px 125px;
  border: 1px solid #626466;
  border-radius: 14px;
  background: #323333;
  box-shadow: 0 12px 40px 12px rgba(0, 0, 0, .6);
}

.editor .titlebar {
  height: 37px;
  background: #3a3d3f;
}

.editor h1 {
  color: #b9bbbc;
}

.toolbar {
  flex: none;
  display: flex;
  align-items: center;
  gap: 2px;
  height: 44px;
  padding: 0 1px 2px 4px;
}

.toolbar button {
  width: 40px;
  height: 40px;
  display: grid;
  place-items: center;
}

.toolbar button svg {
  width: 31px;
  height: 31px;
}

.toolbar hr {
  width: 1px;
  height: 28px;
  margin: 0 4px;
  background: #505050;
}

.toolbar-right {
  flex: 1;
  display: flex;
  justify-content: flex-end;
  align-items: center;
}

.toolbar-right hr {
  margin: 0 7px;
}

.select {
  position: relative;
  display: flex;
}

.select select {
  appearance: none;
  width: 100%;
  height: 27px;
  padding-left: 10px;
  border-radius: 6px;
  background: #606162;
  font-size: 17px;
}

.select svg {
  position: absolute;
  right: 6px;
  top: 5px;
  width: 13px;
  height: 18px;
  pointer-events: none;
}

.grid-select {
  width: 261px;
}

.zoom-select {
  width: 148px;
}

.layer-box {
  display: flex;
  align-items: center;
  gap: 8px;
  width: 149px;
  height: 29px;
  padding-left: 6px;
  border: 1px solid #777;
}

.layer-box i {
  width: 18px;
  height: 18px;
  background: #f0eca2;
}

.layer-box input {
  width: 110px;
  color: #5c5c5c;
}

.toolbar .layer-drop {
  width: 26px;
  height: 26px;
  margin-left: 5px;
  border-radius: 6px;
  background: #8f8f8f;
}

.toolbar .layer-drop svg {
  width: 12px;
  height: 8px;
}

.editor-body {
  flex: 1;
  display: flex;
  min-height: 0;
}

.editor-main {
  flex: 1;
  display: flex;
  flex-direction: column;
  min-width: 0;
}

.editor-panes {
  flex: 1;
  display: flex;
  min-height: 0;
}

.editor h2 {
  height: 22px;
  padding-left: 4px;
  background: #1c1c1c;
  font-size: 15px;
}

.libraries {
  width: 328px;
  display: flex;
  flex-direction: column;
  border-right: 1px solid #222;
}

.filter-row {
  display: flex;
  gap: 8px;
  height: 38px;
  padding: 2px 2px 0;
  align-items: flex-start;
}

.search {
  flex: 1;
  display: flex;
  align-items: center;
  gap: 4px;
  height: 28px;
  padding-left: 3px;
  border: 1px solid #444;
  border-bottom-color: #5e5e5e;
  border-radius: 5px;
  background: #3b3b3b;
}

.search svg {
  width: 26px;
  height: 18px;
}

.search input {
  width: 200px;
  font-size: 17px;
}

.search input::placeholder {
  color: #828282;
}

.sort {
  width: 31px;
  height: 31px;
  display: grid;
  place-items: center;
  border-radius: 6px;
  background: #626262;
}

.sort svg {
  width: 22px;
  height: 22px;
}

.tree-head {
  height: 37px;
  padding: 9px 21px;
  border-bottom: 1px solid #3c4042;
  background: #282c2e;
  font-size: 15px;
  font-weight: 500;
}

.tree {
  flex: 1;
  min-height: 0;
  display: grid;
  grid-template-columns: 1fr 21px;
  grid-template-rows: 1fr 17px;
  background: #25292b;
  color: #6c6f71;
  font-size: 17px;
  overflow: hidden;
}

/* the last row runs a little under the bottom edge */
.tree ul {
  grid-area: 1 / 1 / 3 / 2;
  display: flex;
  flex-direction: column;
  margin-bottom: -3px;
}

.tree li {
  flex: 1;
  display: flex;
  align-items: center;
  gap: 4px;
  padding-left: 6px;
}

.tree .cut {
  flex: none;
  height: 4px;
  align-items: flex-end;
  overflow: hidden;
}

.tree-vbar {
  grid-area: 1 / 2 / 3 / 3;
  display: flex;
  justify-content: center;
  align-items: flex-end;
  padding-bottom: 156px;
  background: #2d3133;
}

.tree-vbar i {
  width: 10px;
  height: 132px;
  border-radius: 5px;
  background: #6b6f71;
}

.tree-hbar {
  grid-area: 2 / 1 / 3 / 2;
  display: flex;
  align-items: center;
  background: rgba(48, 52, 54, .3);
}

.tree-hbar i {
  width: 154px;
  height: 11px;
  margin-left: 13px;
  border-radius: 5px;
  background: rgba(125, 128, 130, .7);
}

.tool-column {
  width: 54px;
  padding: 5px 4px 0 10px;
  display: flex;
  flex-direction: column;
  gap: 2px;
}

.tool-column button {
  width: 40px;
  height: 40px;
  flex: none;
  display: flex;
  flex-direction: column;
  align-items: center;
  justify-content: center;
}

.tool-column svg {
  width: 30px;
  height: 30px;
}

.tool-column .dim {
  height: 8px;
}

.tool-column span {
  color: #c0c0c0;
  font-size: 17px;
  line-height: 18px;
  font-weight: 500;
}

.tool-column .on {
  border: 1px solid #33425f;
  background: #0b1530;
}

.tool-column hr {
  height: 1px;
  margin: 4px 3px;
  background: #4c4c4c;
}

.right-tools {
  padding: 5px 11px 0 3px;
}

.canvas {
  flex: 1;
  background: #000f22;
}

/* grid points with the two axis lines */
.grid-dots {
  height: 100%;
  background:
    linear-gradient(#4a5870, #4a5870) 284px 0 / 1px 100% no-repeat,
    linear-gradient(#7d8796, #7d8796) 422px 0 / 2px 100% no-repeat,
    radial-gradient(circle at 5px 17px, #3a4a5a 1px, transparent 2px) 0 0 / 23px 46px;
}

.msg-panel {
  display: flex;
  height: 35px;
  padding: 2px 12px;
  border-bottom: 1px solid #202020;
  background: #333435;
  color: #7c7c7c;
  font-size: 15px;
  line-height: 17px;
}

.msg-panel div {
  flex: none;
  margin-right: 38px;
}

.editor-status {
  flex: none;
  height: 35px;
  border-top: 1px solid #1f1f1f;
  background: #2d2d2e;
}

/* appearance panel */

.appearance {
  width: 233px;
  display: flex;
  flex-direction: column;
  overflow: hidden;
  font-size: 15px;
}

.segmented {
  display: flex;
  flex: none;
  height: 28px;
  border: 1px solid #3f4446;
  border-bottom-color: #505557;
  border-radius: 7px;
  background: #2f3436;
}

.segmented button {
  padding: 0 16px;
  height: 26px;
  border-radius: 6px;
}

.segmented .active {
  background: #656a6c;
}

.panel-tabs {
  display: flex;
  padding: 16px 0 0 31px;
  height: 53px;
}

.panel-tabs .segmented {
  border-color: #404040;
  background: #2e2e2e;
}

.panel-tabs::after {
  content: "";
  flex: 1;
  height: 1px;
  margin-top: 13px;
  background: #454545;
}

.layers {
  height: 400px;
  display: flex;
  background: #373737;
}

.layers ul {
  flex: 1;
  display: flex;
  flex-direction: column;
}

.layers li {
  flex: 1;
  display: flex;
  align-items: center;
  gap: 7px;
  padding-left: 64px;
}

.layers .selected {
  background: #434343;
}

.layers-bar {
  width: 22px;
  padding: 3px 5px;
  background: #414141;
}

.layers-bar i {
  display: block;
  width: 11px;
  height: 253px;
  border-radius: 5px;
  background: #9c9c9c;
}

.display-options {
  height: 28px;
  padding: 3px 0 0 73px;
  border-bottom: 1px solid #505050;
  color: #686868;
}

.appearance > label {
  height: 27px;
  padding: 6px 0 0 8px;
}

.preset {
  margin: 0 7px 0 6px;
}

.preset::before {
  content: "";
  position: absolute;
  top: 15px;
  left: 12px;
  right: 28px;
  height: 1px;
  background: #b5b5b5;
}

.editor .filter-title {
  margin-top: 17px;
}

.filters {
  display: grid;
  grid-template-columns: 133px 1fr;
  grid-auto-rows: 21px;
  padding: 6px 0 0 4px;
  white-space: nowrap;
}

.filters label {
  display: flex;
  align-items: center;
  gap: 8px;
}

.filters input {
  appearance: none;
  flex: none;
  width: 18px;
  height: 18px;
  border-radius: 4px;
  background: #555;
}

.filters input:checked::before {
  content: "";
  display: block;
  width: 6px;
  height: 11px;
  margin: 1px 0 0 6px;
  border: solid #f2f2f2;
  border-width: 0 2px 2px 0;
  transform: rotate(40deg);
}

/* footprint properties dialog */

.dialog {
  inset: 191px 294px 37px 493px;
  overflow: visible;
  border: 1px solid #5d6163;
  border-radius: 14px;
  background: #2d3234;
  box-shadow: 0 14px 44px 8px rgba(0, 0, 0, .6);
}

.dialog .titlebar {
  height: 36px;
  border-radius: 13px 13px 0 0;
  border-color: #252829;
  background: #3a3c3c;
}

.dialog h1 {
  color: #b9bbbc;
}

.dialog-tabs {
  align-self: center;
  margin-top: 22px;
  z-index: 1;
  font-size: 17px;
}

.dialog-tabs button {
  padding: 0 14px;
}

.frame {
  flex: 1;
  display: flex;
  flex-direction: column;
  min-height: 0;
  margin: -15px 12px 0;
  padding: 30px 10px 10px 9px;
  border: 1px solid #43484a;
  border-radius: 8px;
  background: #33383a;
}

.models {
  width: 100%;
  border-collapse: collapse;
  table-layout: fixed;
  border-top: 2px solid #555859;
  border-bottom: 1px solid #8b8f90;
  background: #1e1e1e;
}

.models th {
  height: 28px;
  padding: 0 4px;
  border-right: 1px solid #55585a;
  background: #2f3030;
  font-size: 17px;
  font-weight: 400;
  text-align: left;
}

.models td {
  height: 64px;
}

.models .num {
  width: 27px;
}

.models .show {
  width: 59px;
  padding: 0 3px;
}

.models .end {
  width: 19px;
  border-right: 0;
}

.model-buttons {
  display: flex;
  gap: 6px;
  margin-top: 6px;
}

.icon-button {
  width: 32px;
  height: 32px;
  display: grid;
  place-items: center;
  border-radius: 6px;
  background: #5b5f61;
}

.icon-button svg {
  width: 22px;
  height: 22px;
}

.trash {
  margin-left: 19px;
  background: #484c4e;
}

.trash svg {
  width: 18px;
}

.push {
  width: 110px;
  height: 27px;
  border-radius: 6px;
  background: #606567;
}

.primary {
  background: #1767e0;
}

.configure {
  width: 167px;
  margin: 1px 0 0 auto;
}

.model-settings {
  flex: 1;
  min-height: 0;
  display: grid;
  grid-template-columns: 233px 1fr 32px;
  margin-top: 25px;
}

.group {
  margin-bottom: 7px;
}

.group h3,
.preview h3 {
  height: 16px;
  padding-left: 14px;
  font-size: 14px;
  line-height: 16px;
}

.box {
  height: 132px;
  padding: 12px 23px 0 18px;
  border: 1px solid #3f4446;
  border-radius: 6px;
  background: #35393b;
}

.axis {
  display: flex;
  align-items: center;
  height: 28px;
  margin-bottom: 5px;
}

.scale .box {
  height: 136px;
}

.scale .axis {
  margin-bottom: 8px;
}

.axis label {
  width: 29px;
}

.axis input {
  width: 136px;
  height: 28px;
  border: 1px solid #3a3f41;
  border-bottom-color: #65696b;
  background: #404446;
}

.spin {
  display: flex;
  flex-direction: column;
  justify-content: space-evenly;
  align-items: center;
  width: 18px;
  height: 26px;
  margin-left: 5px;
  border-radius: 7px;
  background: #65696b;
}

.spin svg {
  width: 12px;
  height: 8px;
}

.opacity {
  margin: 0;
}

.opacity .box {
  height: 44px;
  padding: 0 10px;
}

.opacity input {
  appearance: none;
  display: block;
  width: 206px;
  height: 24px;
}

.opacity input::-webkit-slider-runnable-track {
  height: 5px;
  border-radius: 3px;
  background: #2266cc;
}

.opacity input::-webkit-slider-thumb {
  appearance: none;
  width: 26px;
  height: 24px;
  margin-top: -9px;
  border-radius: 12px;
  background: #9a9d9e;
}

.preview {
  display: flex;
  flex-direction: column;
  min-height: 0;
  margin: 0 5px 0 14px;
}

.preview h3 {
  padding-left: 6px;
}

.preview > svg {
  flex: 1;
  min-height: 0;
  width: 100%;
  background: linear-gradient(#cfcff0, #64627f);
}

.refdes {
  fill: #e8fbff;
  stroke: #e8fbff;
  stroke-width: 1px;
  font-family: Lato, sans-serif;
  font-size: 40px;
}

.view-buttons {
  display: flex;
  flex-direction: column;
  gap: 6px;
  padding-top: 17px;
}

.view-buttons .apart {
  margin-top: 19px;
}

.view-buttons .reload {
  margin-top: 26px;
  color: #5aa5b8;
}

.dialog-footer {
  flex: none;
  display: flex;
  justify-content: flex-end;
  gap: 15px;
  padding: 10px 16px 13px 0;
}

/* markers lie over the dialog and past its edge */

.marker {
  position: absolute;
  pointer-events: none;
}

.yellow {
  left: -11px;
  top: 80px;
  width: 184px;
  height: 174px;
}

.orange {
  left: 13px;
  top: 409px;
  width: 246px;
  height: 176px;
}
```
